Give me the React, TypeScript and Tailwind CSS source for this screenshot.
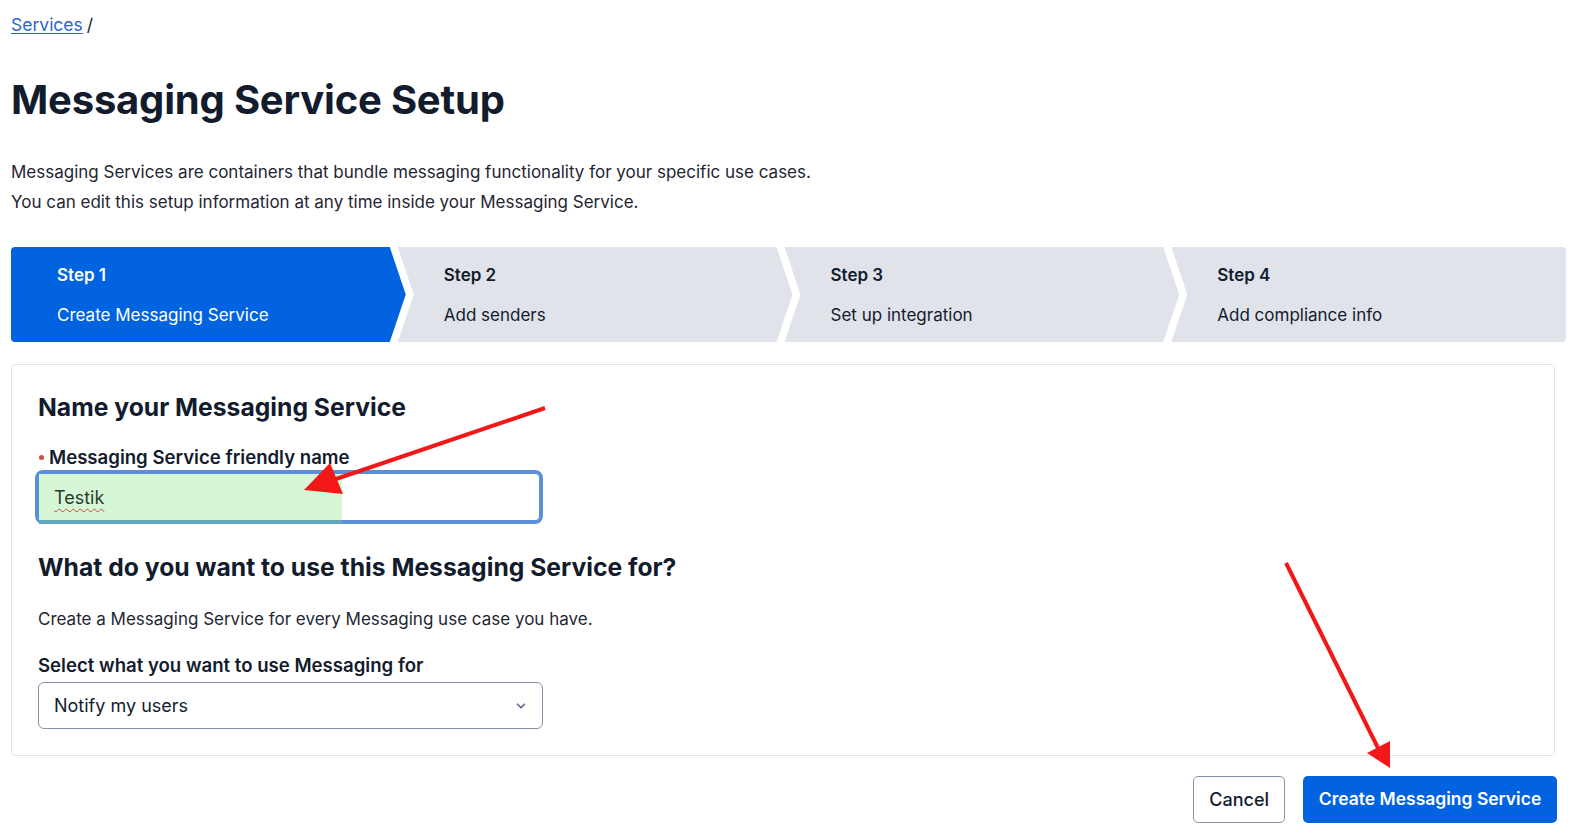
import { ChevronDown } from 'lucide-react';

const STEPS = [
  { n: 1, label: 'Create Messaging Service' },
  { n: 2, label: 'Add senders' },
  { n: 3, label: 'Set up integration' },
  { n: 4, label: 'Add compliance info' },
];

const CLIPS = [
  '[clip-path:polygon(0_0,calc(100%-16px)_0,100%_50%,calc(100%-16px)_100%,0_100%)]',
  '[clip-path:polygon(0_0,calc(100%-16px)_0,100%_50%,calc(100%-16px)_100%,0_100%,16px_50%)]',
  '[clip-path:polygon(0_0,calc(100%-16px)_0,100%_50%,calc(100%-16px)_100%,0_100%,16px_50%)]',
  '[clip-path:polygon(0_0,100%_0,100%_100%,0_100%,16px_50%)]',
];

export default function App() {
  return (
    <div
      className="relative min-h-[839px] w-[1573px] bg-white text-[#121c2d]"
      style={{ fontFamily: 'Inter, "Noto Sans", sans-serif' }}
    >
      <div className="flex flex-col pl-[11px] pr-[7px] pt-[11px]">
        {/* breadcrumb */}
        <div className="text-[17.5px] leading-[28px]">
          <a className="text-[#2e63cf] underline underline-offset-2">Services</a>
          <span className="ml-1">/</span>
        </div>

        <h1 className="mt-[37px] text-[40px] font-bold leading-[48px] tracking-[-0.2px]">
          Messaging Service Setup
        </h1>

        <div className="mt-[33px] text-[17px] leading-[30px] text-[#1f2633]">
          <p>Messaging Services are containers that bundle messaging functionality for your specific use cases.</p>
          <p>You can edit this setup information at any time inside your Messaging Service.</p>
        </div>

        {/* stepper */}
        <div className="mt-[30px] flex h-[95px] overflow-hidden rounded-[4px]">
          {STEPS.map((s, i) => {
            const active = i === 0;
            return (
              <div
                key={s.n}
                className={[
                  'flex flex-1 flex-col justify-center gap-[17px] pl-[46px] pt-[1px] text-[17px] leading-[23px]',
                  i > 0 ? '-ml-2' : '',
                  active ? 'bg-[#0263e0] text-white' : 'bg-[#e1e3ea] text-[#121c2d]',
                  CLIPS[i],
                ].join(' ')}
              >
                <span className="font-semibold">Step {s.n}</span>
                <span>{s.label}</span>
              </div>
            );
          })}
        </div>

        {/* card */}
        <div className="mt-[22px] mr-[11px] rounded-[4px] border border-[#e1e3ea] px-[26px] pb-[26px] pt-[26px]">
          <h2 className="text-[24.7px] font-bold leading-[32px]">Name your Messaging Service</h2>

          <label className="mt-[22px] flex items-center text-[18.6px] font-semibold leading-[24px]">
            <span className="mr-[5px] ml-[1px] h-[5px] w-[5px] rounded-full bg-[#d6473f]" />
            Messaging Service friendly name
          </label>

          <div className="relative -mx-[3px] mt-[1px] h-[54px] w-[508px] rounded-[8px] border-[4px] border-[#5b8fd9] bg-white">
            <div className="absolute -bottom-[4px] left-0 top-0 w-[303px] bg-[#d6f7d6]" />
            <div className="absolute -bottom-[4px] left-0 h-[4px] w-[303px] bg-[#62a6bd]" />
            <span className="relative ml-[15px] flex h-full items-center text-[18px] text-[#2b3a2e] underline decoration-[#c2453d] decoration-wavy decoration-1 underline-offset-4">
              Testik
            </span>
          </div>

          <h2 className="mt-[27px] text-[24.7px] font-bold leading-[32px]">
            What do you want to use this Messaging Service for?
          </h2>

          <p className="mt-[24px] text-[17px] leading-[24px] text-[#1f2633]">
            Create a Messaging Service for every Messaging use case you have.
          </p>

          <label className="mt-[22px] block text-[18.6px] font-semibold leading-[24px]">
            Select what you want to use Messaging for
          </label>

          <div className="mt-[5px] flex h-[47px] w-[505px] items-center justify-between rounded-[6px] border border-[#8891aa] pl-[15px] pr-[14px] text-[18px]">
            <span>Notify my users</span>
            <ChevronDown size={14} strokeWidth={3} className="text-[#606b85]" />
          </div>
        </div>

        {/* footer */}
        <div className="mt-[20px] flex justify-end gap-[18px] pr-[9px]">
          <button className="h-[47px] rounded-[5px] border border-[#8891aa] bg-white px-[15px] text-[18px] font-medium text-[#121c2d]">
            Cancel
          </button>
          <button className="h-[47px] w-[254px] rounded-[5px] bg-[#0263e0] text-[17.5px] font-semibold text-white">
            Create Messaging Service
          </button>
        </div>
      </div>

      {/* annotation arrows */}
      <svg className="pointer-events-none absolute left-0 top-0" width="1573" height="839">
        <line x1="545" y1="408" x2="336" y2="479" stroke="#f21818" strokeWidth="4" />
        <polygon points="304,490 330,463 343,494" fill="#f21818" />
        <line x1="1286" y1="563" x2="1378" y2="748" stroke="#f21818" strokeWidth="4" />
        <polygon points="1390,768 1367,753 1390,741" fill="#f21818" />
      </svg>
    </div>
  );
}
